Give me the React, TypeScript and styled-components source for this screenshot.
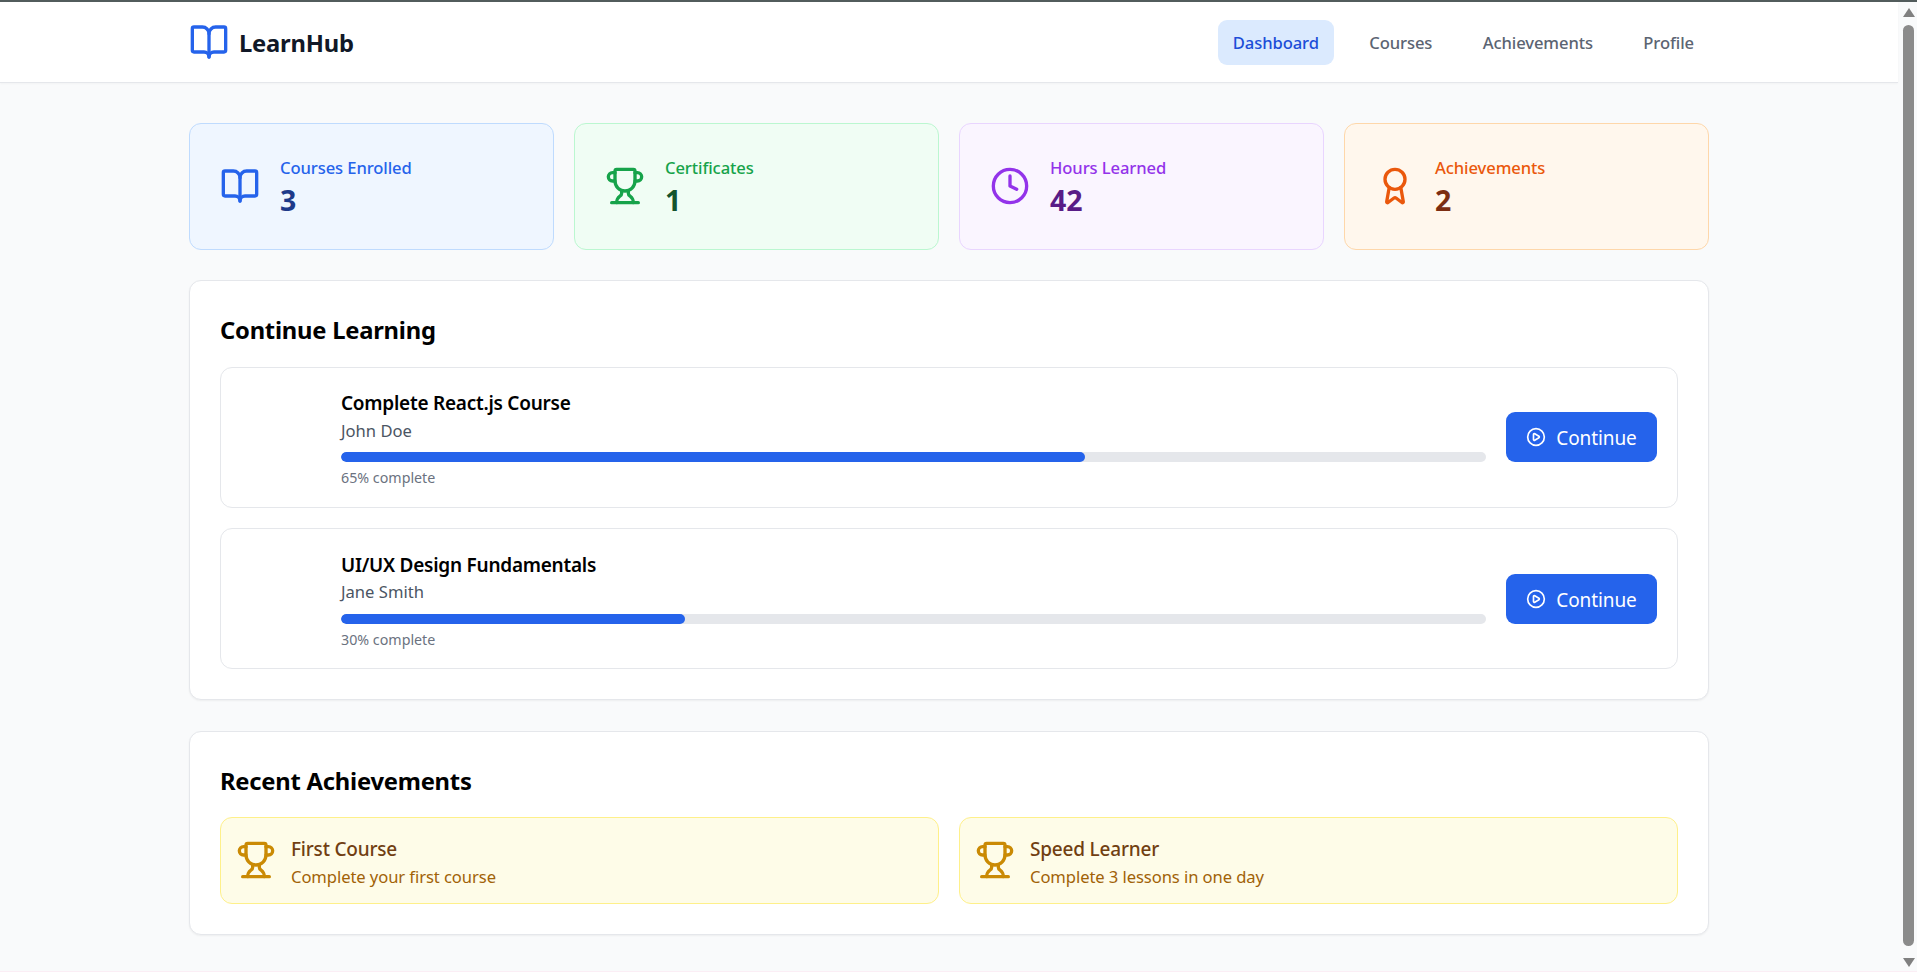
import React from "react";
import styled, { createGlobalStyle } from "styled-components";
import { Award, BookOpen, CirclePlay, Clock, Trophy } from "lucide-react";

const GlobalStyle = createGlobalStyle`
  html, body { margin: 0; padding: 0; height: 100%; overflow: hidden; }
  body { font-family: "Noto Sans", "Open Sans", "Liberation Sans", sans-serif; background: #f9fafb; }
  * { box-sizing: border-box; }
`;

const tones = {
  blue: { bg: "#eff6ff", border: "#bfdbfe", label: "#2563eb", value: "#1e3a8a" },
  green: { bg: "#f0fdf4", border: "#bbf7d0", label: "#16a34a", value: "#14532d" },
  purple: { bg: "#faf5ff", border: "#e9d5ff", label: "#9333ea", value: "#581c87" },
  orange: { bg: "#fff7ed", border: "#fed7aa", label: "#ea580c", value: "#7c2d12" },
};
type Tone = keyof typeof tones;

const Shell = styled.div`
  height: 972px; display: flex; flex-direction: column; background: #f9fafb; overflow: hidden;
  border-bottom: 1px solid #fbeef5;
`;
const TopEdge = styled.div`
  height: 2px; flex: none; background: #525c5c;
`;
const Viewport = styled.div`
  flex: 1; min-height: 0; display: flex;
`;
const Page = styled.div`
  flex: 1; min-width: 0;
`;
const NavBar = styled.header`
  height: 81px; background: #fff; border-bottom: 1px solid #e5e7eb;
  box-shadow: 0 1px 2px rgba(0,0,0,.03);
`;
const Container = styled.div`
  width: 1520px; margin: 0 auto;
`;
const NavInner = styled(Container)`
  height: 80px; display: flex; align-items: center; justify-content: space-between;
`;
const Brand = styled.div`
  display: flex; align-items: center; gap: 10px; color: #2563eb;
`;
const BrandName = styled.span`
  padding-top: 2px; font-size: 23.75px; font-weight: 700; color: #111827; line-height: 34px; letter-spacing: -0.2px;
`;
const Links = styled.nav`
  display: flex; gap: 20.4px;
`;
const NavLink = styled.a<{ $active?: boolean }>`
  height: 45px; display: flex; align-items: center; padding: 1px 15px 0; border-radius: 9px;
  font-size: 16.6px; font-weight: 500; letter-spacing: -0.1px;
  color: ${(p) => (p.$active ? "#1d4ed8" : "#5b6472")};
  background: ${(p) => (p.$active ? "#dbeafe" : "transparent")};
`;
const Main = styled(Container)`
  padding-top: 40px; display: flex; flex-direction: column; gap: 30.5px;
`;
const StatGrid = styled.section`
  display: grid; grid-template-columns: repeat(4, 1fr); gap: 20px;
`;
const StatCard = styled.div<{ $tone: Tone }>`
  height: 126.5px; display: flex; align-items: center; gap: 20px; padding: 0 30px;
  border-radius: 12px;
  background: ${(p) => tones[p.$tone].bg};
  border: 1px solid ${(p) => tones[p.$tone].border};
  color: ${(p) => tones[p.$tone].label};
`;
const StatText = styled.div`
  display: flex; flex-direction: column; padding-top: 3px;
`;
const StatLabel = styled.span<{ $tone: Tone }>`
  font-size: 16.6px; font-weight: 500; line-height: 24px; letter-spacing: -0.1px; color: ${(p) => tones[p.$tone].label};
`;
const StatValue = styled.span<{ $tone: Tone }>`
  margin-top: 1px; font-size: 28.5px; font-weight: 700; line-height: 38px; color: ${(p) => tones[p.$tone].value};
`;
const Panel = styled.section`
  background: #fff; border: 1px solid #e5e7eb; border-radius: 12px; padding: 30px;
  box-shadow: 0 1px 2px rgba(0,0,0,.05);
`;
const PanelTitle = styled.h2`
  margin: 0 0 17.5px; font-size: 23.75px; line-height: 38px; font-weight: 700; color: #000; letter-spacing: -0.22px;
`;
const CourseList = styled.div`
  display: flex; flex-direction: column; gap: 20.5px;
`;
const CourseRow = styled.article`
  display: flex; align-items: center; gap: 20px; padding: 19px 20px 19px 19px;
  height: 141px; border: 1px solid #e5e7eb; border-radius: 12px;
`;
const Thumb = styled.div`
  width: 81px; align-self: stretch; flex: none;
`;
const CourseBody = styled.div`
  flex: 1; min-width: 0; padding-top: 3px;
`;
const CourseTitle = styled.h3`
  margin: 0; font-size: 19px; line-height: 28.5px; font-weight: 600; color: #000; letter-spacing: -0.25px;
`;
const Teacher = styled.p`
  margin: 0; font-size: 16.6px; line-height: 25px; color: #4b5563;
`;
const Track = styled.div`
  height: 10px; margin-top: 9.5px; background: #e5e7eb; border-radius: 5px; overflow: hidden;
`;
const Fill = styled.div`
  height: 100%; background: #2563eb; border-radius: 5px;
`;
const Percent = styled.p`
  margin: 5px 0 0; font-size: 14.25px; line-height: 21px; color: #6b7280;
`;
const ContinueButton = styled.button`
  flex: none; width: 151px; height: 50px; display: flex; align-items: center; justify-content: center; gap: 10px;
  border: 0; border-radius: 9px; background: #2563eb; color: #fff;
  font-family: inherit; font-size: 19px; letter-spacing: -0.1px;
`;
const ButtonLabel = styled.span`
  padding-top: 2px;
`;
const AchievementGrid = styled.div`
  display: grid; grid-template-columns: 1fr 1fr; gap: 20px;
`;
const AchievementCard = styled.div`
  height: 86.5px; display: flex; align-items: center; gap: 15px; padding: 0 15px;
  background: #fefce8; border: 1px solid #fef08a; border-radius: 12px; color: #ca8a04;
`;
const AchievementText = styled.div`
  display: flex; flex-direction: column; padding-top: 3px;
`;
const AchievementName = styled.span`
  font-size: 19px; line-height: 28.5px; font-weight: 500; color: #713f12; letter-spacing: -0.2px;
`;
const AchievementDesc = styled.span`
  font-size: 16.6px; line-height: 25px; color: #a16207; letter-spacing: -0.08px;
`;
const ScrollRail = styled.aside`
  width: 19px; flex: none; display: flex; flex-direction: column; align-items: center;
  padding: 6px 0 4px 2px;
`;
const Arrow = styled.div<{ $down?: boolean }>`
  flex: none; width: 0; height: 0; border-left: 6.5px solid transparent; border-right: 6.5px solid transparent;
  ${(p) => (p.$down ? "border-top: 9px solid #808080;" : "border-bottom: 9px solid #808080;")}
`;
const Thumbbar = styled.div`
  flex: 1; width: 11px; margin: 8px 0 12px; background: #8b8b8b; border-radius: 6px;
`;

const stats: { tone: Tone; label: string; value: string; Icon: typeof BookOpen }[] = [
  { tone: "blue", label: "Courses Enrolled", value: "3", Icon: BookOpen },
  { tone: "green", label: "Certificates", value: "1", Icon: Trophy },
  { tone: "purple", label: "Hours Learned", value: "42", Icon: Clock },
  { tone: "orange", label: "Achievements", value: "2", Icon: Award },
];
const courses = [
  { title: "Complete React.js Course", teacher: "John Doe", progress: 65 },
  { title: "UI/UX Design Fundamentals", teacher: "Jane Smith", progress: 30 },
];
const achievements = [
  { name: "First Course", desc: "Complete your first course" },
  { name: "Speed Learner", desc: "Complete 3 lessons in one day" },
];

export default function App() {
  return (
    <Shell>
      <GlobalStyle />
      <TopEdge />
      <Viewport>
        <Page>
          <NavBar>
            <NavInner>
              <Brand>
                <BookOpen size={40} />
                <BrandName>LearnHub</BrandName>
              </Brand>
              <Links>
                <NavLink $active>Dashboard</NavLink>
                <NavLink>Courses</NavLink>
                <NavLink>Achievements</NavLink>
                <NavLink>Profile</NavLink>
              </Links>
            </NavInner>
          </NavBar>
          <Main>
            <StatGrid>
              {stats.map(({ tone, label, value, Icon }) => (
                <StatCard key={label} $tone={tone}>
                  <Icon size={40} />
                  <StatText>
                    <StatLabel $tone={tone}>{label}</StatLabel>
                    <StatValue $tone={tone}>{value}</StatValue>
                  </StatText>
                </StatCard>
              ))}
            </StatGrid>
            <Panel>
              <PanelTitle>Continue Learning</PanelTitle>
              <CourseList>
                {courses.map((c) => (
                  <CourseRow key={c.title}>
                    <Thumb />
                    <CourseBody>
                      <CourseTitle>{c.title}</CourseTitle>
                      <Teacher>{c.teacher}</Teacher>
                      <Track>
                        <Fill style={{ width: `${c.progress}%` }} />
                      </Track>
                      <Percent>{c.progress}% complete</Percent>
                    </CourseBody>
                    <ContinueButton>
                      <CirclePlay size={20} />
                      <ButtonLabel>Continue</ButtonLabel>
                    </ContinueButton>
                  </CourseRow>
                ))}
              </CourseList>
            </Panel>
            <Panel>
              <PanelTitle>Recent Achievements</PanelTitle>
              <AchievementGrid>
                {achievements.map((a) => (
                  <AchievementCard key={a.name}>
                    <Trophy size={40} />
                    <AchievementText>
                      <AchievementName>{a.name}</AchievementName>
                      <AchievementDesc>{a.desc}</AchievementDesc>
                    </AchievementText>
                  </AchievementCard>
                ))}
              </AchievementGrid>
            </Panel>
          </Main>
        </Page>
        <ScrollRail>
          <Arrow />
          <Thumbbar />
          <Arrow $down />
        </ScrollRail>
      </Viewport>
    </Shell>
  );
}
